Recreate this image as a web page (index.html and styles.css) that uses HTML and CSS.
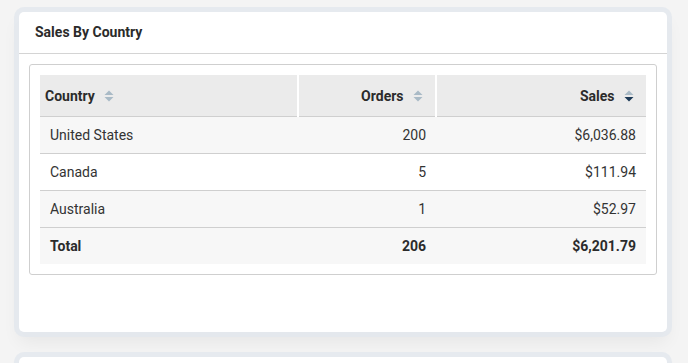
FILE: index.html
```html
<!DOCTYPE html>
<html>
<head>
<meta charset="utf-8">
<link rel="stylesheet" href="styles.css">
</head>
<body>
<div class="page">
  <section class="card">
    <header class="card-header">Sales By Country</header>
    <div class="card-body">
      <div class="table-box">
        <table class="grid">
          <colgroup>
            <col class="c1"><col class="c2"><col class="c3">
          </colgroup>
          <thead>
            <tr>
              <th class="left"><span>Country</span>
                <svg class="sort" viewBox="0 0 10 12"><path class="up" d="M5 0.5L9.5 5H0.5Z"/><path class="dn" d="M0.5 7H9.5L5 11.5Z"/></svg>
              </th>
              <th class="right"><span>Orders</span>
                <svg class="sort" viewBox="0 0 10 12"><path class="up" d="M5 0.5L9.5 5H0.5Z"/><path class="dn" d="M0.5 7H9.5L5 11.5Z"/></svg>
              </th>
              <th class="right"><span>Sales</span>
                <svg class="sort" viewBox="0 0 10 12"><path class="up" d="M5 0.5L9.5 5H0.5Z"/><path class="dn active" d="M0.5 7H9.5L5 11.5Z"/></svg>
              </th>
            </tr>
          </thead>
          <tbody>
            <tr class="odd"><td>United States</td><td class="num">200</td><td class="num">$6,036.88</td></tr>
            <tr><td>Canada</td><td class="num">5</td><td class="num">$111.94</td></tr>
            <tr class="odd"><td>Australia</td><td class="num">1</td><td class="num">$52.97</td></tr>
          </tbody>
          <tfoot>
            <tr><td>Total</td><td class="num">206</td><td class="num">$6,201.79</td></tr>
          </tfoot>
        </table>
      </div>
    </div>
  </section>
  <section class="card next"></section>
</div>
</body>
</html>
```

FILE: styles.css
```css
html, body {
  margin: 0;
  padding: 0;
  background: #f4f4f4;
  font-family: Roboto, "Liberation Sans", Arial, sans-serif;
  color: #333;
}
.page {
  padding: 12px 21px 0 19px;
  display: flex;
  flex-direction: column;
  gap: 25px;
}
.card {
  background: #fff;
  border-radius: 5px;
  box-shadow: 0 0 0 5px rgba(226, 231, 238, 0.8), 0 10px 18px rgba(0, 0, 0, 0.06);
  min-height: 320px;
  box-sizing: border-box;
}
.card.next {
  min-height: 40px;
}
.card-header {
  height: 41px;
  line-height: 41px;
  padding-left: 16px;
  font-size: 14px;
  font-weight: 700;
  color: #2b2b2b;
  border-bottom: 1px solid #d4d4d4;
}
.card-body {
  padding: 10px;
}
.table-box {
  border: 1px solid #cfcfcf;
  border-radius: 3px;
  padding: 10px;
}
.grid {
  width: 100%;
  border-collapse: collapse;
  font-size: 14px;
  table-layout: fixed;
}
.c1 { width: 258px; }
.c2 { width: 138px; }
.grid th {
  background: #ebebeb;
  height: 41px;
  font-weight: 700;
  color: #2b2b2b;
  padding: 0 12px 0 5px;
  border-left: 2px solid #fff;
  border-bottom: 1px solid #cfcfcf;
  white-space: nowrap;
}
.grid th:first-child { border-left: none; }
.grid th.left { text-align: left; }
.grid th.right { text-align: right; }
.grid th span { vertical-align: middle; }
.sort {
  width: 10px;
  height: 12px;
  margin-left: 6px;
  vertical-align: middle;
}
.sort .up, .sort .dn { fill: #a9bac6; }
.sort .dn.active { fill: #1d3a57; }
.grid td {
  height: 36px;
  padding: 0 10px;
  color: #333;
  border-bottom: 1px solid #cfcfcf;
}
.grid tbody tr.odd td { background: #f7f7f7; }
.grid td.num { text-align: right; }
.grid tfoot td {
  background: #f7f7f7;
  font-weight: 700;
  color: #2b2b2b;
  border-bottom: none;
}
```
